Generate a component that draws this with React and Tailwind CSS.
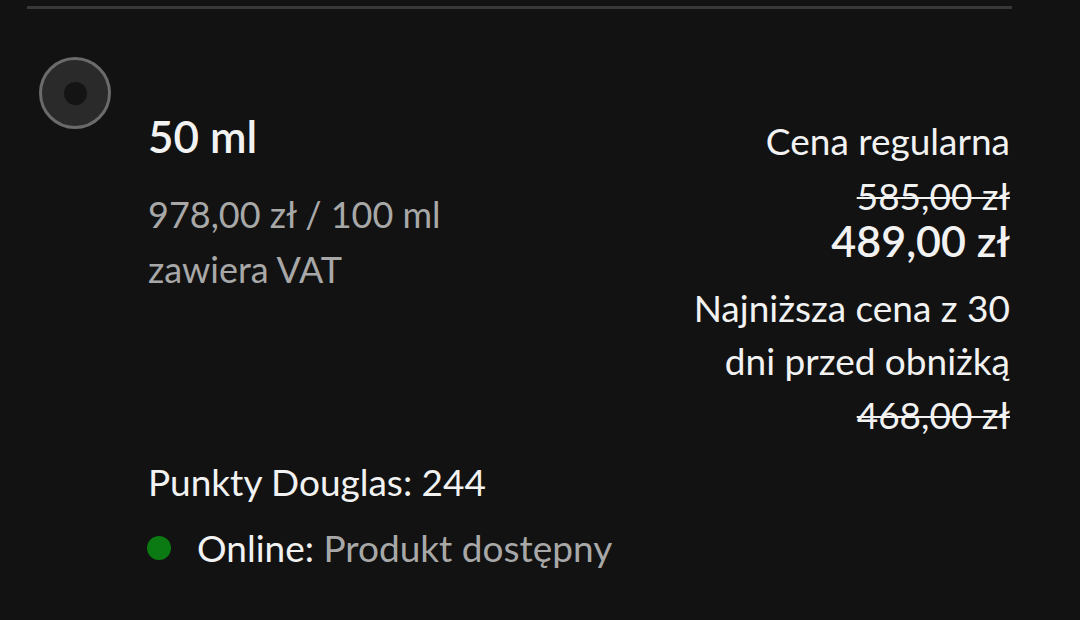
export default function App() {
  return (
    <div className="w-[1080px] h-[620px] bg-[#121212] overflow-hidden text-[#f2f2f2]" style={{ fontFamily: "Lato, 'Noto Sans', sans-serif" }}>
      <div className="pl-[27px] pr-[68px] pt-[6px]">
        <div className="h-[3px] bg-[#383838]" />
      </div>
      <div className="flex pl-[39px] pr-[70px]">
        <div className="mt-[48px] w-[72px] h-[72px] shrink-0 rounded-full border-[3px] border-[#6b6b6b] bg-[#2a2a2a] flex items-center justify-center">
          <div className="w-[23px] h-[23px] rounded-full bg-[#141414]" />
        </div>
        <div className="ml-[37px] mt-[105px] flex-1 flex flex-col">
          <div className="flex justify-between">
            <div className="flex flex-col">
              <div className="text-[44px] leading-none font-semibold">50 ml</div>
              <div className="mt-[29px] text-[36px] leading-[55px] text-[#a8a8a8]">
                <div>978,00 zł / 100 ml</div>
                <div>zawiera VAT</div>
              </div>
            </div>
            <div className="flex flex-col items-end text-right text-[37px]">
              <div className="mt-[8px] leading-none">Cena regularna</div>
              <div className="mt-[18px] leading-none line-through decoration-2">585,00 zł</div>
              <div className="mt-[5px] text-[43px] leading-none font-semibold">489,00 zł</div>
              <div className="mt-[19px] leading-[53px]">
                <div>Najniższa cena z 30</div>
                <div>dni przed obniżką</div>
              </div>
              <div className="mt-[9px] leading-none line-through decoration-2">468,00 zł</div>
            </div>
          </div>
          <div className="mt-[30px] text-[37px] leading-none">Punkty Douglas: 244</div>
          <div className="mt-[29px] flex items-center text-[37px] leading-none">
            <div className="w-[24px] h-[24px] rounded-full bg-[#0b7a12] -ml-[1px]" />
            <div className="ml-[26px]">
              Online: <span className="text-[#a8a8a8]">Produkt dostępny</span>
            </div>
          </div>
        </div>
      </div>
    </div>
  );
}
